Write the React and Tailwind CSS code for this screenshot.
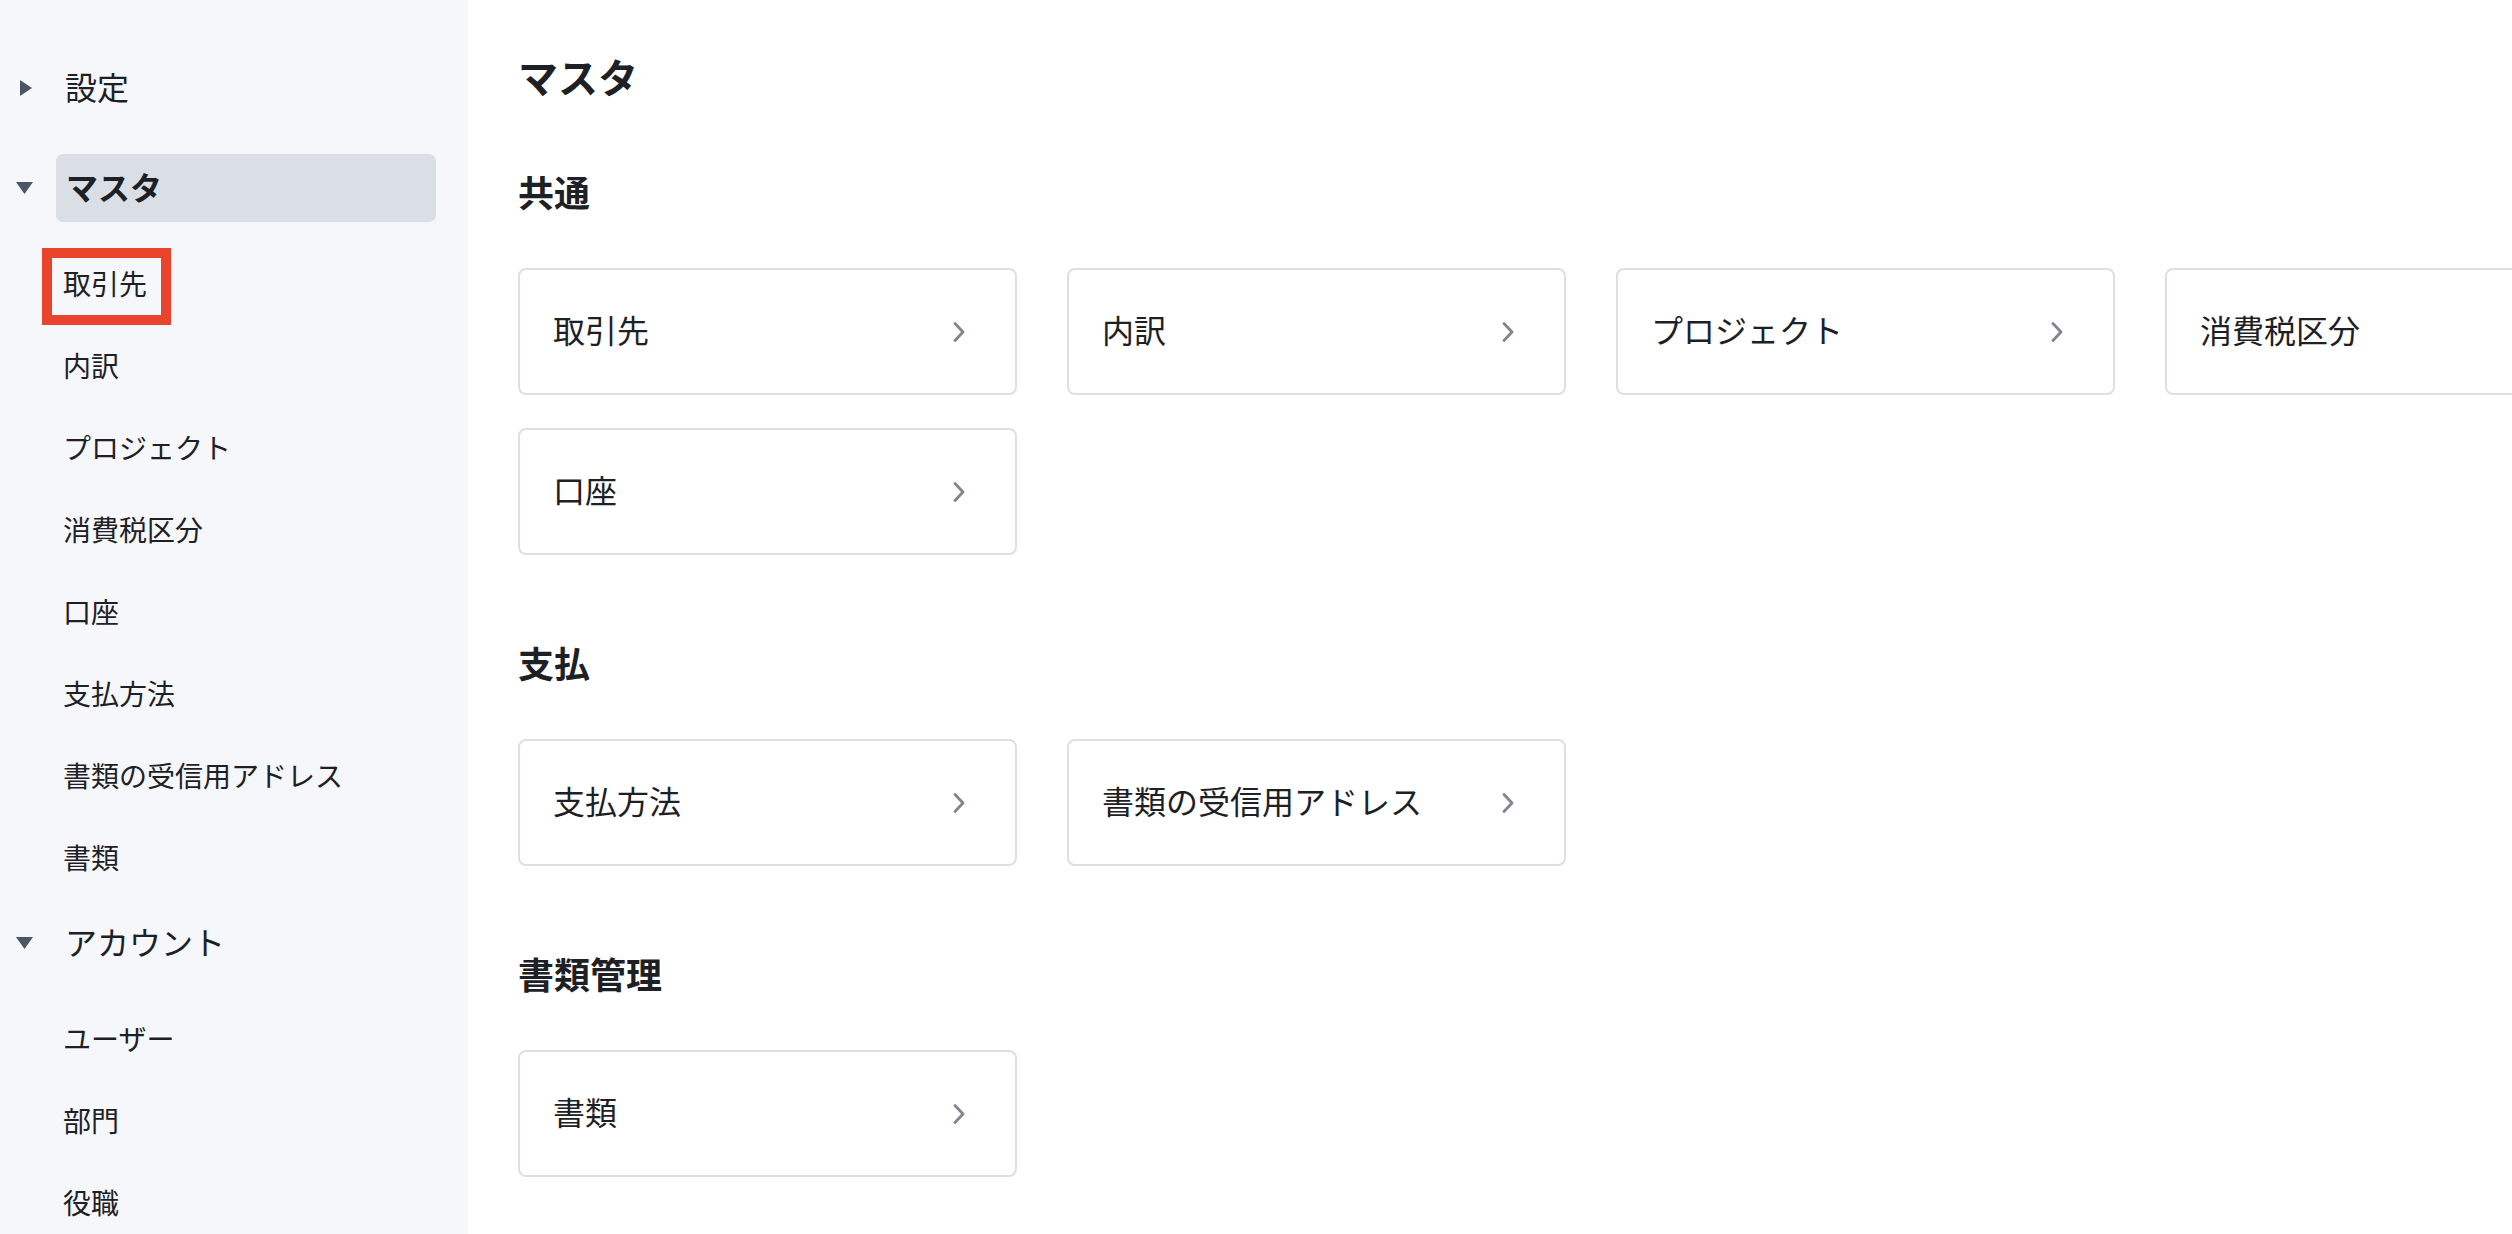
import React from "react";

const FONT = { fontFamily: '"Noto Sans CJK JP", "Noto Sans", sans-serif' };

function TriRight() {
  return (
    <svg width="12" height="16" viewBox="0 0 12 16" className="block">
      <polygon points="0,0 12,8 0,16" fill="#4b5563" />
    </svg>
  );
}

function TriDown() {
  return (
    <svg width="17" height="12" viewBox="0 0 17 12" className="block">
      <polygon points="0,0 17,0 8.5,12" fill="#4b5563" />
    </svg>
  );
}

function Chevron() {
  return (
    <svg width="16" height="24" viewBox="0 0 16 24" className="block">
      <path d="M4 3.5 L12 12 L4 20.5" fill="none" stroke="#7f868f" strokeWidth="2.8" strokeLinecap="round" strokeLinejoin="round" />
    </svg>
  );
}

function GroupHeader({ label, open, active }) {
  return (
    <div className="flex h-[68px] items-center">
      <div className={open ? "flex w-[56px] items-center pl-[16px]" : "flex w-[56px] items-center pl-[20px]"}>
        {open ? <TriDown /> : <TriRight />}
      </div>
      <div
        className={
          active
            ? "flex h-[68px] w-[380px] items-center rounded-[7px] bg-[#dadee5] pb-[5px] pl-[10px] text-[32px] font-bold leading-none text-[#1d2125]"
            : "flex h-[68px] w-[380px] items-center pb-[5px] pl-[9px] text-[32px] leading-none text-[#1d2125]"
        }
      >
        {label}
      </div>
    </div>
  );
}

function SubItem({ label, marked }) {
  return (
    <div className="relative flex h-[82px] items-center pb-[4px] pl-[63px] text-[28px] leading-none text-[#1d2125]">
      {label}
      {marked && (
        <div className="absolute left-[42px] top-[4px] h-[77px] w-[129px] border-[10px] border-[#e8432b]" />
      )}
    </div>
  );
}

function Card({ label }) {
  return (
    <div className="flex h-[127px] w-[499px] shrink-0 items-center justify-between rounded-[8px] border-2 border-[#dcdfe5] bg-white pl-[33px] pr-[48px]">
      <span className="pb-[5px] text-[32px] leading-none text-[#1d2125]">{label}</span>
      <Chevron />
    </div>
  );
}

function Section({ title, rows, first }) {
  return (
    <div className={first ? "mt-[54px]" : "mt-[79px]"}>
      <div className="flex h-[60px] items-center pb-[5px] text-[36px] font-bold leading-none text-[#1d2125]">{title}</div>
      <div className="mt-[45px] flex flex-col gap-[33px]">
        {rows.map((row, i) => (
          <div key={i} className="flex gap-[50px]">
            {row.map((c) => (
              <Card key={c} label={c} />
            ))}
          </div>
        ))}
      </div>
    </div>
  );
}

export default function App() {
  const master = ["取引先", "内訳", "プロジェクト", "消費税区分", "口座", "支払方法", "書類の受信用アドレス", "書類"];
  const account = ["ユーザー", "部門", "役職"];
  return (
    <div className="flex h-[1234px] w-[2512px] overflow-hidden bg-white" style={FONT}>
      <aside className="h-full w-[468px] shrink-0 bg-[#f5f7fa] pt-[54px]">
        <GroupHeader label="設定" />
        <div className="mt-[32px]">
          <GroupHeader label="マスタ" open active />
          <div className="pt-[22px]">
            {master.map((m, i) => (
              <SubItem key={m} label={m} marked={i === 0} />
            ))}
          </div>
        </div>
        <div className="mt-[9px]">
          <GroupHeader label="アカウント" open />
          <div className="pt-[22px]">
            {account.map((m) => (
              <SubItem key={m} label={m} />
            ))}
          </div>
        </div>
      </aside>
      <main className="min-w-0 flex-1 overflow-hidden pl-[50px] pt-[49px]">
        <div className="flex h-[60px] items-center pb-[6px] text-[40px] font-bold leading-none text-[#1d2125]">マスタ</div>
        <Section first title="共通" rows={[["取引先", "内訳", "プロジェクト", "消費税区分"], ["口座"]]} />
        <Section title="支払" rows={[["支払方法", "書類の受信用アドレス"]]} />
        <Section title="書類管理" rows={[["書類"]]} />
      </main>
    </div>
  );
}
